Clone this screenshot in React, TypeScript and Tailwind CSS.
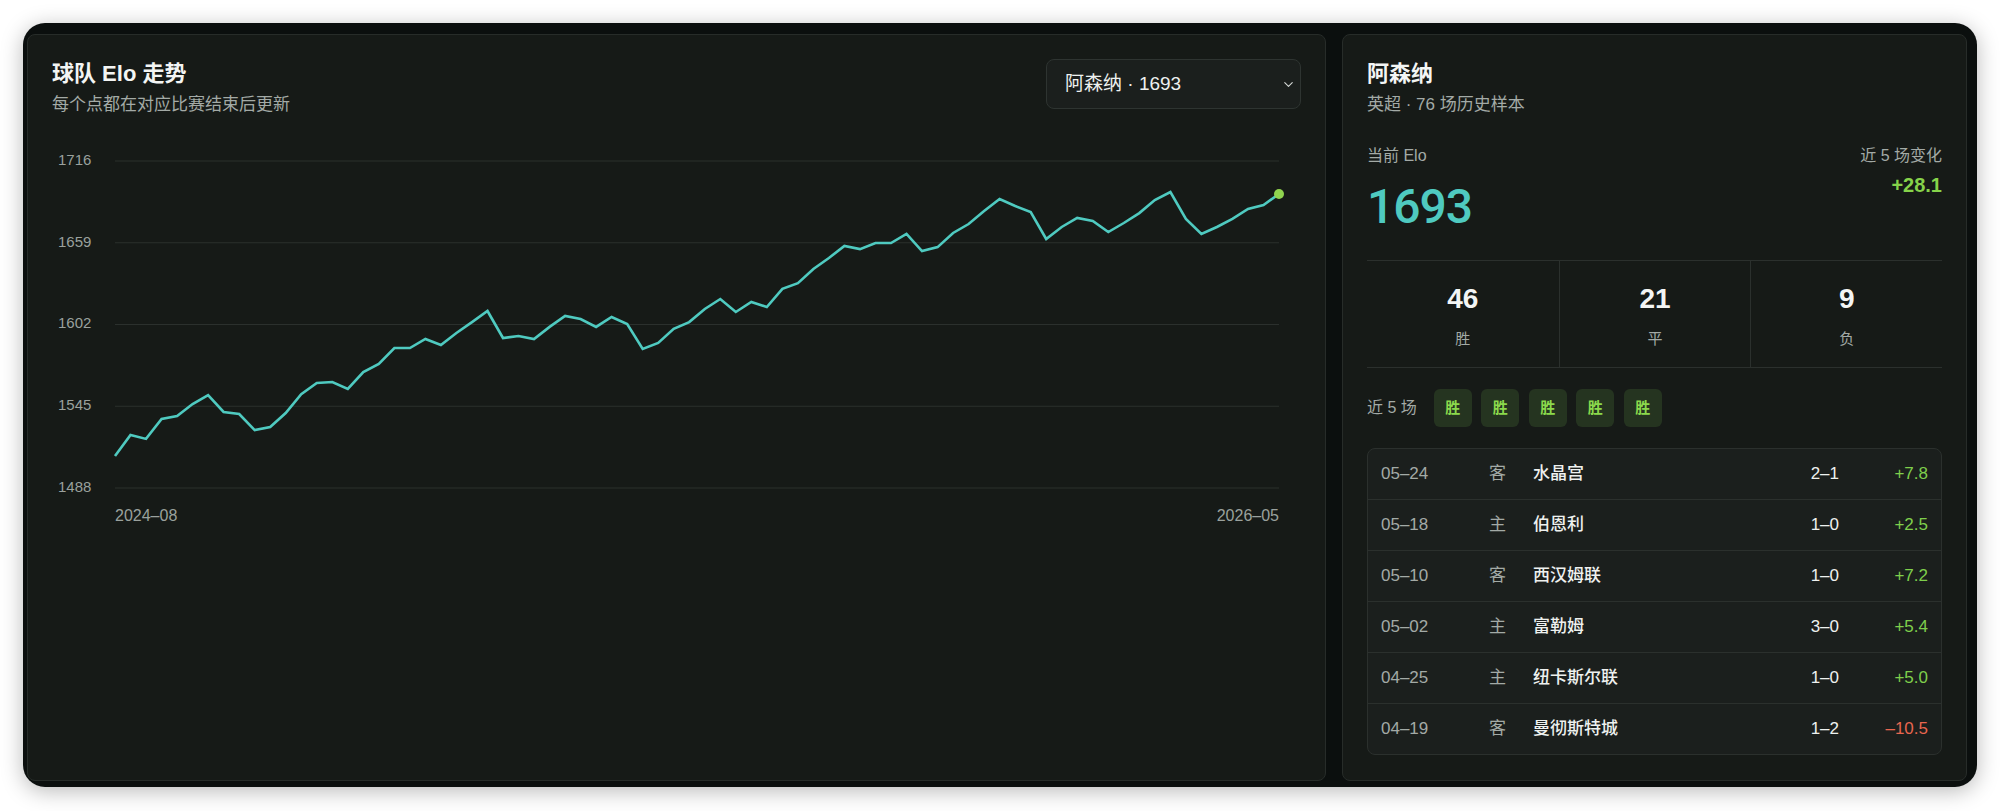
import { ChevronDown } from "lucide-react";

const eloSeries = [
  1510.3, 1525.0, 1522.2, 1536.1, 1538.2, 1546.6, 1552.8, 1541.0, 1539.6, 1528.4,
  1530.5, 1540.3, 1553.5, 1561.2, 1561.9, 1557.0, 1568.9, 1574.5, 1585.6, 1585.6,
  1591.9, 1587.7, 1596.1, 1603.7, 1611.4, 1592.6, 1594.0, 1591.9, 1600.3, 1607.9,
  1605.8, 1600.3, 1607.2, 1602.3, 1584.9, 1589.1, 1598.9, 1603.7, 1612.8, 1619.8,
  1610.7, 1617.7, 1614.2, 1626.8, 1630.9, 1640.7, 1648.4, 1656.7, 1654.6, 1658.8,
  1658.8, 1665.1, 1653.2, 1656.0, 1665.8, 1672.1, 1681.1, 1689.5, 1684.6, 1680.4,
  1661.6, 1670.0, 1676.3, 1674.2, 1666.5, 1672.8, 1679.7, 1688.8, 1694.4, 1675.6,
  1665.1, 1670.0, 1675.6, 1682.5, 1685.3, 1693.0,
];

const ticks = [1716, 1659, 1602, 1545, 1488];

const matches = [
  { date: "05–24", side: "客", team: "水晶宫", score: "2–1", delta: "+7.8", up: true },
  { date: "05–18", side: "主", team: "伯恩利", score: "1–0", delta: "+2.5", up: true },
  { date: "05–10", side: "客", team: "西汉姆联", score: "1–0", delta: "+7.2", up: true },
  { date: "05–02", side: "主", team: "富勒姆", score: "3–0", delta: "+5.4", up: true },
  { date: "04–25", side: "主", team: "纽卡斯尔联", score: "1–0", delta: "+5.0", up: true },
  { date: "04–19", side: "客", team: "曼彻斯特城", score: "1–2", delta: "–10.5", up: false },
];

const font = { fontFamily: '"Liberation Sans", "Noto Sans CJK SC", sans-serif' };

function EloChart() {
  const x0 = 63;
  const x1 = 1227;
  const yTop = 30;
  const yBottom = 357;
  const max = 1716;
  const min = 1488;
  const toY = (v: number) => yTop + ((max - v) * (yBottom - yTop)) / (max - min);
  const toX = (i: number) => x0 + (i * (x1 - x0)) / (eloSeries.length - 1);
  const points = eloSeries.map((v, i) => `${toX(i).toFixed(1)},${toY(v).toFixed(1)}`).join(" ");
  const last = eloSeries[eloSeries.length - 1];

  return (
    <svg width="1249" height="420" className="mt-[14px] block" style={font}>
      {ticks.map((t) => (
        <g key={t}>
          <line x1={x0} x2={x1} y1={toY(t)} y2={toY(t)} stroke="#2b302d" strokeWidth="1" />
          <text x="6" y={toY(t)} dominantBaseline="middle" fill="#9aa19d" fontSize="15">
            {t}
          </text>
        </g>
      ))}
      <polyline points={points} fill="none" stroke="#4fcac0" strokeWidth="2.6" strokeLinejoin="miter" />
      <circle cx={toX(eloSeries.length - 1)} cy={toY(last)} r="5" fill="#8fd34e" />
      <text x={x0} y="386" dominantBaseline="middle" fill="#9aa19d" fontSize="16">
        2024–08
      </text>
      <text x={x1} y="386" dominantBaseline="middle" textAnchor="end" fill="#9aa19d" fontSize="16">
        2026–05
      </text>
    </svg>
  );
}

export default function App() {
  return (
    <div className="min-h-screen bg-white p-[23px]" style={font}>
      <div className="h-[764px] rounded-[22px] bg-[#0b0f0e] pt-[11px] pb-[6px] pl-[4px] pr-[10px] shadow-[0_4px_22px_rgba(0,0,0,0.28)]">
        <div className="flex h-full gap-[16px]">
          {/* chart card */}
          <div className="flex-1 rounded-[8px] border border-[#272c29] bg-[#161a17] p-6">
            <div className="flex items-start justify-between">
              <div>
                <h2 className="text-[22px] font-bold leading-[30px] text-[#f3f5f4]">球队 Elo 走势</h2>
                <p className="mt-[4px] text-[17px] leading-[24px] text-[#a3aaa6]">每个点都在对应比赛结束后更新</p>
              </div>
              <div className="relative flex h-[50px] w-[255px] items-center rounded-[8px] border border-[#2e3431] bg-[#1b1f1d] pl-[18px]">
                <span className="text-[19px] text-[#eef1ef]">阿森纳 · 1693</span>
                <ChevronDown className="absolute right-[4px] top-[17px] h-[15px] w-[15px] text-[#d3d7d4]" strokeWidth={1.8} />
              </div>
            </div>
            <EloChart />
          </div>

          {/* team card */}
          <div className="w-[625px] rounded-[8px] border border-[#272c29] bg-[#161a17] p-6">
            <h2 className="text-[22px] font-bold leading-[30px] text-[#f3f5f4]">阿森纳</h2>
            <p className="mt-[4px] text-[17px] leading-[24px] text-[#a3aaa6]">英超 · 76 场历史样本</p>

            <div className="mt-[28px] flex justify-between">
              <div>
                <div className="text-[16px] leading-[22px] text-[#a3aaa6]">当前 Elo</div>
                <div
                  className="mt-[12px] text-[48px] font-medium leading-[56px] tracking-[-1px] text-[#4fcac0]"
                  style={{ fontFamily: 'Roboto, "Liberation Sans", sans-serif' }}
                >
                  1693
                </div>
              </div>
              <div className="text-right">
                <div className="text-[16px] leading-[22px] text-[#a3aaa6]">近 5 场变化</div>
                <div className="mt-[4px] text-[20px] font-semibold leading-[28px] text-[#86d34a]">+28.1</div>
              </div>
            </div>

            <div className="mt-[25px] grid grid-cols-3 border-y border-[#2b302d]">
              {[
                ["46", "胜"],
                ["21", "平"],
                ["9", "负"],
              ].map(([n, l], i) => (
                <div key={l} className={`flex flex-col items-center pt-[20px] pb-[17px] ${i > 0 ? "border-l border-[#2b302d]" : ""}`}>
                  <div className="text-[28px] font-bold leading-[36px] text-[#f3f5f4]">{n}</div>
                  <div className="mt-[11px] text-[15px] leading-[22px] text-[#a3aaa6]">{l}</div>
                </div>
              ))}
            </div>

            <div className="mt-[21px] flex items-center">
              <span className="mr-[17px] text-[16px] text-[#a3aaa6]">近 5 场</span>
              <div className="flex gap-[9.5px]">
                {[0, 1, 2, 3, 4].map((i) => (
                  <span
                    key={i}
                    className="flex h-[38px] w-[38px] items-center justify-center rounded-[6px] bg-[#253420] text-[15px] font-semibold text-[#8bd94c]"
                  >
                    胜
                  </span>
                ))}
              </div>
            </div>

            <div className="mt-[21px] overflow-hidden rounded-[8px] border border-[#2b302d] bg-[#1b1f1d]">
              {matches.map((m, i) => (
                <div
                  key={m.date}
                  className={`grid h-[50px] grid-cols-[108px_44px_1fr_70px_89px] items-center px-[13px] text-[17px] ${
                    i > 0 ? "box-content border-t border-[#2b302d]" : ""
                  }`}
                >
                  <span className="text-[#a3aaa6]">{m.date}</span>
                  <span className="text-[#a3aaa6]">{m.side}</span>
                  <span className="font-medium text-[#eef1ef]">{m.team}</span>
                  <span className="text-right text-[#eef1ef]">{m.score}</span>
                  <span className={`text-right ${m.up ? "text-[#7fcf4c]" : "text-[#e8664f]"}`}>{m.delta}</span>
                </div>
              ))}
            </div>
          </div>
        </div>
      </div>
    </div>
  );
}
